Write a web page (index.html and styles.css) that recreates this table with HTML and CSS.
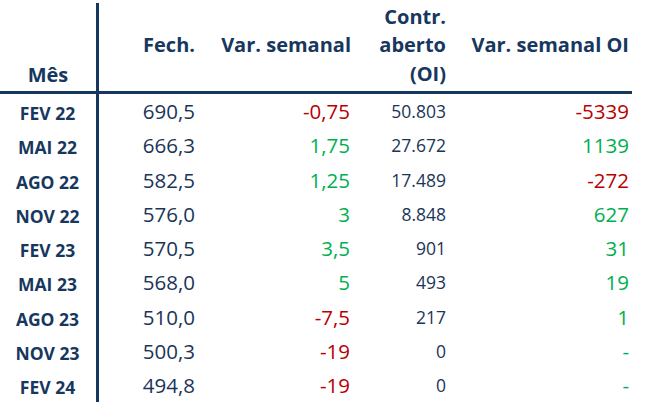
FILE: index.html
```html
<!DOCTYPE html>
<html lang="pt">
<head>
<meta charset="utf-8">
<title>Contratos</title>
<link rel="stylesheet" href="styles.css">
</head>
<body>
<div class="table">
  <div class="head">
    <div class="h month-h">Mês</div>
    <div class="h">Fech.</div>
    <div class="h">Var. semanal</div>
    <div class="h oi">Contr.<br>aberto<br>(OI)</div>
    <div class="h">Var. semanal OI</div>
  </div>
  <div class="body">
    <div class="row"><div class="m">FEV 22</div><div class="f">690,5</div><div class="v neg">-0,75</div><div class="c">50.803</div><div class="o neg">-5339</div></div>
    <div class="row"><div class="m">MAI 22</div><div class="f">666,3</div><div class="v pos">1,75</div><div class="c">27.672</div><div class="o pos">1139</div></div>
    <div class="row"><div class="m">AGO 22</div><div class="f">582,5</div><div class="v pos">1,25</div><div class="c">17.489</div><div class="o neg">-272</div></div>
    <div class="row"><div class="m">NOV 22</div><div class="f">576,0</div><div class="v pos">3</div><div class="c">8.848</div><div class="o pos">627</div></div>
    <div class="row"><div class="m">FEV 23</div><div class="f">570,5</div><div class="v pos">3,5</div><div class="c">901</div><div class="o pos">31</div></div>
    <div class="row"><div class="m">MAI 23</div><div class="f">568,0</div><div class="v pos">5</div><div class="c">493</div><div class="o pos">19</div></div>
    <div class="row"><div class="m">AGO 23</div><div class="f">510,0</div><div class="v neg">-7,5</div><div class="c">217</div><div class="o pos">1</div></div>
    <div class="row"><div class="m">NOV 23</div><div class="f">500,3</div><div class="v neg">-19</div><div class="c">0</div><div class="o pos">-</div></div>
    <div class="row"><div class="m">FEV 24</div><div class="f">494,8</div><div class="v neg">-19</div><div class="c">0</div><div class="o pos">-</div></div>
  </div>
</div>
</body>
</html>
```
FILE: styles.css
```css
html, body {
  margin: 0;
  padding: 0;
  background: #ffffff;
}
body {
  font-family: "Open Sans", "Liberation Sans", sans-serif;
  color: #1b3558;
  width: 653px;
  height: 405px;
  overflow: hidden;
}
.table {
  width: 632px;
}
.head, .row {
  display: grid;
  grid-template-columns: 99px 96px 156px 95px 183px;
}
.head {
  height: 91px;
  align-items: center;
  border-bottom: 3px solid #17375e;
}
.h {
  font-weight: 700;
  font-size: 20px;
  line-height: 28.5px;
  text-align: right;
  color: #17375e;
}
.month-h {
  align-self: stretch;
  margin-top: 3px;
  display: flex;
  align-items: flex-end;
  justify-content: center;
  padding-bottom: 2px;
  border-right: 3px solid #17375e;
}
.row {
  height: 34.25px;
}
.row > div {
  text-align: right;
  line-height: 34.25px;
  white-space: nowrap;
}
.m {
  border-right: 3px solid #17375e;
  text-align: center !important;
  font-weight: 700;
  font-size: 17.5px;
  color: #17375e;
  padding-top: 5px;
  box-sizing: border-box;
  line-height: 29.25px !important;
  padding-right: 1px;
}
.f {
  font-size: 20.5px;
  color: #1b3558;
}
.v {
  font-size: 20.5px;
  padding-right: 1px;
}
.c {
  font-size: 17.5px;
  color: #1b3558;
}
.o {
  font-size: 20.5px;
}
.neg { color: #b80000; }
.pos { color: #00b050; }
```
